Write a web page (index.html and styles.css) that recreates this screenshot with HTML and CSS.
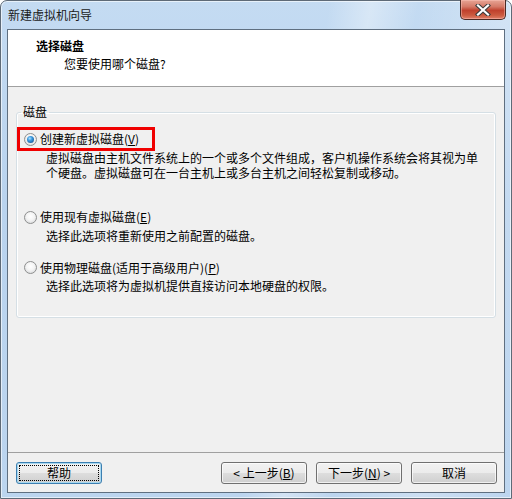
FILE: index.html
```html
<!DOCTYPE html>
<html lang="zh-CN">
<head>
<meta charset="utf-8">
<title>新建虚拟机向导</title>
<link rel="stylesheet" href="styles.css">
</head>
<body>
<div class="window">
  <div class="titlebar">
    <span class="title">新建虚拟机向导</span>
    <button class="close" aria-label="关闭">
      <svg width="18" height="12" viewBox="0 0 18 12">
        <path d="M4 1.5 L14 10.5 M14 1.5 L4 10.5" stroke="#3b3b3b" stroke-width="4.2" stroke-linecap="square" fill="none"/>
        <path d="M4 1.5 L14 10.5 M14 1.5 L4 10.5" stroke="#ffffff" stroke-width="2.2" stroke-linecap="square" fill="none"/>
      </svg>
    </button>
  </div>
  <div class="client">
    <div class="header">
      <div class="h-title">选择磁盘</div>
      <div class="h-sub">您要使用哪个磁盘?</div>
    </div>
    <div class="main">
      <fieldset class="group">
        <legend>磁盘</legend>
        <div class="option opt1">
          <label class="opt-label highlight"><span class="radio checked"></span>创建新虚拟磁盘(<u>V</u>)</label>
          <div class="desc">虚拟磁盘由主机文件系统上的一个或多个文件组成，客户机操作系统会将其视为单<br>个硬盘。虚拟磁盘可在一台主机上或多台主机之间轻松复制或移动。</div>
        </div>
        <div class="option opt2">
          <label class="opt-label"><span class="radio"></span>使用现有虚拟磁盘(<u>E</u>)</label>
          <div class="desc">选择此选项将重新使用之前配置的磁盘。</div>
        </div>
        <div class="option opt3">
          <label class="opt-label"><span class="radio"></span>使用物理磁盘(适用于高级用户)(<u>P</u>)</label>
          <div class="desc">选择此选项将为虚拟机提供直接访问本地硬盘的权限。</div>
        </div>
      </fieldset>
    </div>
    <div class="footer">
      <button class="btn focus"><span class="focus-ring">帮助</span></button>
      <div class="spacer"></div>
      <button class="btn">&lt; 上一步(<u>B</u>)</button>
      <button class="btn">下一步(<u>N</u>) &gt;</button>
      <button class="btn">取消</button>
    </div>
  </div>
</div>
</body>
</html>
```

FILE: styles.css
```css
* { box-sizing: border-box; }
html, body {
  margin: 0;
  padding: 0;
  background: #ffffff;
}
body {
  width: 512px;
  height: 499px;
  overflow: hidden;
  font-family: "Noto Sans CJK SC", "Liberation Sans", sans-serif;
  font-size: 12px;
  color: #000;
}
.window {
  width: 512px;
  height: 499px;
  border: 1px solid #5e6a77;
  border-radius: 7px 7px 0 0;
  background:
    linear-gradient(100deg, rgba(255,255,255,0) 0%, rgba(255,255,255,0) 55%, rgba(255,255,255,0.35) 62%, rgba(255,255,255,0) 70%, rgba(255,255,255,0.25) 85%, rgba(255,255,255,0) 100%),
    linear-gradient(180deg, #c4dbf2 0%, #b9d3ee 40%, #bcd5ef 100%);
  box-shadow: inset 0 0 0 1px rgba(255,255,255,0.6);
  display: flex;
  flex-direction: column;
}
.titlebar {
  height: 28px;
  display: flex;
  align-items: flex-start;
  padding-left: 7px;
  flex: none;
}
.title {
  margin-top: 6px;
  line-height: 16px;
  font-size: 12px;
  color: #1a1a1a;
}
.close {
  margin-left: auto;
  margin-right: 5px;
  margin-top: -1px;
  width: 46px;
  height: 20px;
  padding: 0;
  border: 1px solid #4a2a24;
  border-top: none;
  border-radius: 0 0 5px 5px;
  background: linear-gradient(180deg, #e7a595 0%, #d57a68 35%, #c0412d 55%, #cb5a3f 80%, #e0806a 100%);
  box-shadow: inset 0 0 0 1px rgba(255,200,190,0.45);
  display: flex;
  align-items: center;
  justify-content: center;
}
.client {
  margin: 0 6px 0 6px;
  height: 464px;
  border: 1px solid #5f6f80;
  background: #f0f0f0;
  display: flex;
  flex-direction: column;
  flex: none;
}
.header {
  height: 57px;
  background: #ffffff;
  border-bottom: 1px solid #a0a0a0;
  padding: 8px 0 0 28px;
  flex: none;
}
.h-title {
  font-weight: bold;
  line-height: 16px;
}
.h-sub {
  line-height: 16px;
  margin-top: 2px;
  padding-left: 28px;
}
.main {
  flex: 1;
  padding: 18px 8px 0 8px;
}
.group {
  margin: 0;
  height: 213px;
  padding: 0;
  border: 1px solid #d5dfe5;
  border-radius: 3px;
  box-shadow: inset 0 0 0 1px #ffffff;
}
legend {
  padding: 0 2px;
  margin-left: 4px;
  line-height: 14px;
}
.opt-label {
  display: inline-flex;
  align-items: center;
  line-height: 16px;
  height: 16px;
  padding-left: 7px;
}
.opt-label.highlight {
  border: 3px solid #f00000;
  padding-left: 4px;
  width: 138px;
  height: 24px;
}
.opt1 { margin-top: 8px; }
.opt1 .desc { margin-top: -1px; }
.opt2 { margin-top: 29px; }
.opt3 { margin-top: 17px; }
.opt2 .desc, .opt3 .desc { margin-top: 1px; }
.radio {
  width: 13px;
  height: 13px;
  border-radius: 50%;
  border: 1px solid #8e8f8f;
  background: radial-gradient(circle at 50% 40%, #ffffff 0%, #f4f4f4 45%, #cfd1d3 100%);
  margin-right: 3px;
  position: relative;
  flex: none;
}
.radio.checked::after {
  content: "";
  position: absolute;
  left: 2px;
  top: 2px;
  width: 7px;
  height: 7px;
  border-radius: 50%;
  background: radial-gradient(circle at 40% 35%, #b4e2ff 0%, #3b9be0 35%, #1a5a9b 80%, #123e72 100%);
}
.desc {
  padding-left: 29px;
  line-height: 15px;
}
.footer {
  height: 40px;
  border-top: 1px solid #a0a0a0;
  display: flex;
  align-items: flex-start;
  padding: 9px 7px 0 8px;
  gap: 9px;
  flex: none;
}
.spacer { flex: 1; }
.btn {
  width: 86px;
  height: 22px;
  padding: 0;
  font-family: "Noto Sans CJK SC", "Liberation Sans", sans-serif;
  font-size: 12px;
  line-height: 16px;
  color: #000;
  border: 1px solid #707070;
  border-radius: 3px;
  background: linear-gradient(180deg, #f2f2f2 0%, #ebebeb 50%, #dddddd 51%, #cfcfcf 100%);
  box-shadow: inset 0 0 0 1px rgba(255,255,255,0.7);
}
.btn.focus {
  border-color: #3c7fb1;
  box-shadow: inset 0 0 0 1px #a8d8f0;
  padding: 2px;
}
.focus-ring {
  display: flex;
  align-items: center;
  justify-content: center;
  width: 100%;
  height: 100%;
  border: 1px dotted #000;
}
u { text-decoration: underline; text-underline-offset: 1px; }
```
